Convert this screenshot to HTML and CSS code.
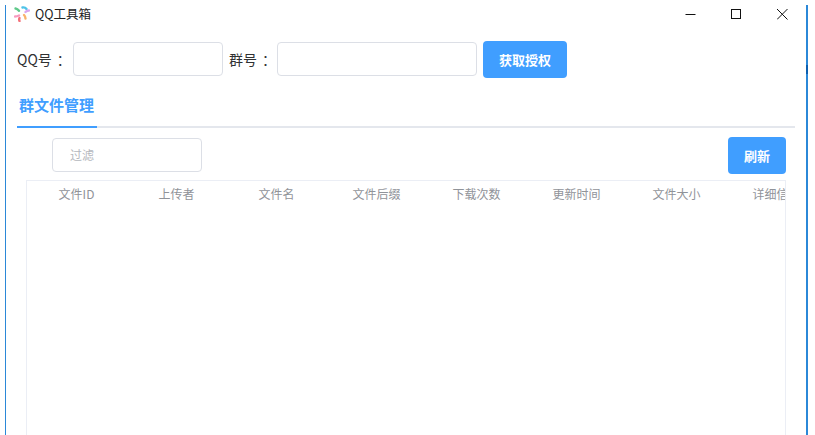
FILE: index.html
```html
<!DOCTYPE html>
<html lang="zh">
<head>
<meta charset="utf-8">
<title>QQ工具箱</title>
<link rel="stylesheet" href="styles.css">
</head>
<body>
<div class="edge edge-left"></div>
<main class="window">
  <header class="titlebar">
    <svg class="logo" viewBox="0 0 16 16" width="16" height="16">
      <g fill="none" stroke-width="2.4" stroke-linecap="round">
        <path d="M1.5 2.5 Q3.5 2.8 5 4.8" stroke="#5fc98a"/>
        <path d="M8.5 1.5 Q11 1 12.5 3" stroke="#4fc3e8"/>
        <path d="M15 4.5 Q13 4.5 11.5 6" stroke="#d9a6ef"/>
        <path d="M1 10.5 Q3 10.5 5 9.5" stroke="#f79ac0"/>
        <path d="M5.5 12 Q4.8 13.5 5.5 15" stroke="#f4727a"/>
        <path d="M10 9 Q11.5 10.5 11.5 12.5" stroke="#f9b26b"/>
      </g>
    </svg>
    <span class="app-name">QQ工具箱</span>
    <div class="win-controls">
      <svg class="win-btn" viewBox="0 0 11 11" width="11" height="11"><path d="M0.5 5.5H10.5" stroke="#111"/></svg>
      <svg class="win-btn" viewBox="0 0 11 11" width="11" height="11"><rect x="0.5" y="0.5" width="9" height="9" fill="none" stroke="#111"/></svg>
      <svg class="win-btn" viewBox="0 0 11 11" width="11" height="11"><path d="M0 0L10.5 10.5M10.5 0L0 10.5" stroke="#111"/></svg>
    </div>
  </header>

  <section class="auth-row">
    <label class="field-label">QQ号<span class="colon">：</span></label>
    <input class="text-input input-qq" type="text">
    <label class="field-label label-group">群号<span class="colon">：</span></label>
    <input class="text-input input-group" type="text">
    <button class="btn btn-auth">获取授权</button>
  </section>

  <nav class="tabs"><span class="tab">群文件管理</span></nav>

  <section class="toolbar">
    <input class="text-input filter" type="text" placeholder="过滤">
    <button class="btn btn-refresh">刷新</button>
  </section>

  <section class="table">
    <div class="table-head">
      <span class="cell">文件ID</span>
      <span class="cell">上传者</span>
      <span class="cell">文件名</span>
      <span class="cell">文件后缀</span>
      <span class="cell">下载次数</span>
      <span class="cell">更新时间</span>
      <span class="cell">文件大小</span>
      <span class="cell">详细信息</span>
    </div>
  </section>
</main>
<div class="edge edge-right"><span class="edge-mark"></span></div>
</body>
</html>
```
FILE: styles.css
```css
* { box-sizing: border-box; }
html, body { height: 100%; }
body {
  margin: 0;
  display: flex;
  height: 435px;
  overflow: hidden;
  background: #fff;
  font-family: "Noto Sans CJK SC", "Liberation Sans", sans-serif;
  color: #303133;
}
.edge {
  flex: none;
  width: 1px;
  margin-top: 5px;
  background: #2b88d8;
}
.edge-left { margin-left: 5px; }
.edge-right { position: relative; width: 2px; }
.edge-mark {
  position: absolute;
  left: 0;
  top: 60px;
  width: 2px;
  height: 9px;
  background: #0b5fb0;
}
.window {
  flex: none;
  width: 800px;
  height: 435px;
  display: flex;
  flex-direction: column;
  overflow: hidden;
}
.titlebar {
  flex: none;
  height: 28px;
  display: flex;
  align-items: center;
  padding: 0 18px 0 8px;
}
.logo { flex: none; }
.app-name {
  margin-left: 5px;
  font-size: 12.5px;
  line-height: 16px;
  color: #222;
}
.win-controls {
  margin-left: auto;
  display: flex;
  align-items: center;
  gap: 35px;
}
.win-btn { flex: none; }
.auth-row {
  flex: none;
  height: 37px;
  margin-top: 13px;
  display: flex;
  align-items: center;
  padding-left: 11px;
}
.field-label {
  width: 56px;
  margin-bottom: 2px;
  font-size: 14px;
  color: #303133;
  white-space: nowrap;
}
.colon { padding-left: 5px; }
.label-group { width: 48px; margin-left: 6px; }
.text-input {
  width: 150px;
  height: 34px;
  padding: 0 17px;
  border: 1px solid #dcdfe6;
  border-radius: 4px;
  background: #fff;
  font: inherit;
  font-size: 12px;
  outline: none;
}
.text-input::placeholder { color: #b4b7bd; opacity: 1; }
.input-qq, .input-group, .filter { margin-bottom: 2px; }
.input-group { width: 200px; }
.btn {
  border: 0;
  border-radius: 4px;
  background: #409eff;
  color: #fff;
  font: inherit;
  font-size: 13px;
  font-weight: 700;
  padding: 0;
}
.btn-auth { width: 84px; height: 37px; margin-left: 6px; }
.tabs {
  flex: none;
  height: 50px;
  margin: 0 11px;
  border-bottom: 2px solid #e4e7ed;
  display: flex;
  align-items: flex-end;
}
.tab {
  width: 80px;
  height: 40px;
  margin-bottom: -2px;
  padding-left: 2px;
  border-bottom: 2px solid #409eff;
  color: #409eff;
  font-size: 15px;
  font-weight: 700;
  line-height: 33px;
  white-space: nowrap;
}
.toolbar {
  flex: none;
  height: 37px;
  margin-top: 9px;
  display: flex;
  align-items: center;
  justify-content: space-between;
  padding: 0 20px 0 46px;
}
.btn-refresh { width: 58px; height: 37px; }
.table {
  flex: none;
  width: 760px;
  height: 260px;
  margin: 6px 0 0 20px;
  border: 1px solid #ebeef5;
  border-bottom: 0;
  overflow: hidden;
}
.table-head { display: flex; }
.cell {
  flex: none;
  width: 100px;
  height: 25px;
  padding-right: 1px;
  text-align: center;
  font-size: 12px;
  line-height: 25px;
  color: #909399;
  white-space: nowrap;
}
```
